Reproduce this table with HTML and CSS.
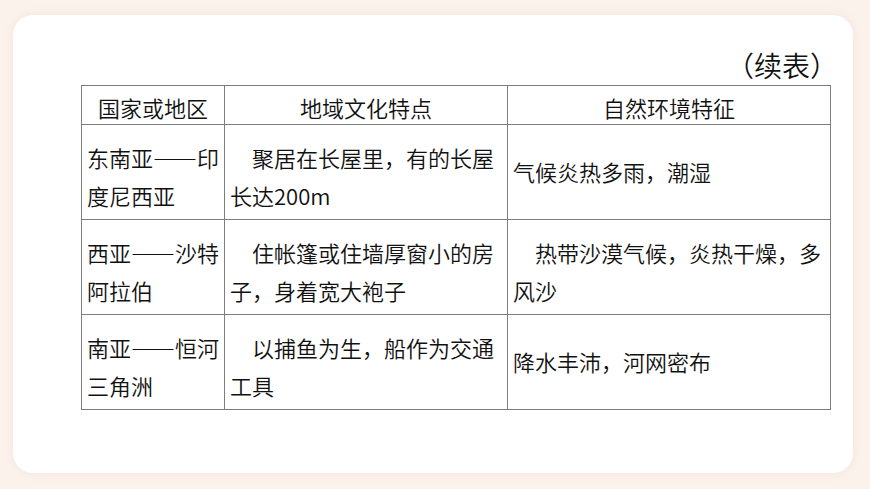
FILE: index.html
```html
<!DOCTYPE html>
<html lang="zh-CN">
<head>
<meta charset="utf-8">
<title>续表</title>
<link rel="stylesheet" href="styles.css">
</head>
<body>
<div class="page">
  <div class="card">
    <div class="title">（续表）</div>
    <table class="grid">
      <colgroup>
        <col class="c1">
        <col class="c2">
        <col class="c3">
      </colgroup>
      <tr class="head">
        <th>国家或地区</th>
        <th>地域文化特点</th>
        <th>自然环境特征</th>
      </tr>
      <tr class="row">
        <td>东南亚——印<br>度尼西亚</td>
        <td class="indent">聚居在长屋里，有的长屋<br>长达200m</td>
        <td class="single">气候炎热多雨，潮湿</td>
      </tr>
      <tr class="row">
        <td>西亚——沙特<br>阿拉伯</td>
        <td class="indent">住帐篷或住墙厚窗小的房<br>子，身着宽大袍子</td>
        <td class="indent">热带沙漠气候，炎热干燥，多<br>风沙</td>
      </tr>
      <tr class="row">
        <td>南亚——恒河<br>三角洲</td>
        <td class="indent">以捕鱼为生，船作为交通<br>工具</td>
        <td class="single">降水丰沛，河网密布</td>
      </tr>
    </table>
  </div>
</div>
</body>
</html>
```

FILE: styles.css
```css
html, body {
  margin: 0;
  padding: 0;
}
body {
  width: 870px;
  height: 489px;
  background: #fbf2ec;
  font-family: "Noto Sans CJK SC", "Noto Sans", sans-serif;
  font-weight: 350;
  color: #111111;
  overflow: hidden;
  text-spacing-trim: space-all;
}
.page {
  padding: 15px 17px 16px 13px;
  height: 489px;
  box-sizing: border-box;
}
.card {
  height: 458px;
  background: #ffffff;
  border-radius: 20px;
  box-shadow: 0 0 8px rgba(235, 200, 180, 0.35);
  padding: 35px 0 0 68px;
  box-sizing: border-box;
}
.title {
  width: 757px;
  text-align: right;
  font-size: 28px;
  line-height: 30px;
  text-spacing-trim: space-all;
}
.grid {
  margin-top: 5px;
  border-collapse: collapse;
  width: 749px;
  table-layout: fixed;
  font-size: 22px;
  line-height: 38px;
}
.c1 { width: 143px; }
.c2 { width: 283px; }
.c3 { width: 323px; }
.grid th,
.grid td {
  border: 1px solid #7d7d7d;
  vertical-align: middle;
  padding: 8px 4px 0 5px;
  white-space: nowrap;
}
.grid th {
  font-weight: 350;
  text-align: center;
  padding: 4px 4px 0 4px;
  line-height: 30px;
}
.head {
  height: 39px;
}
.row {
  height: 95px;
}
.grid td.single {
  padding: 0 4px 2px 5px;
}
.indent {
  text-indent: 1em;
}
```
